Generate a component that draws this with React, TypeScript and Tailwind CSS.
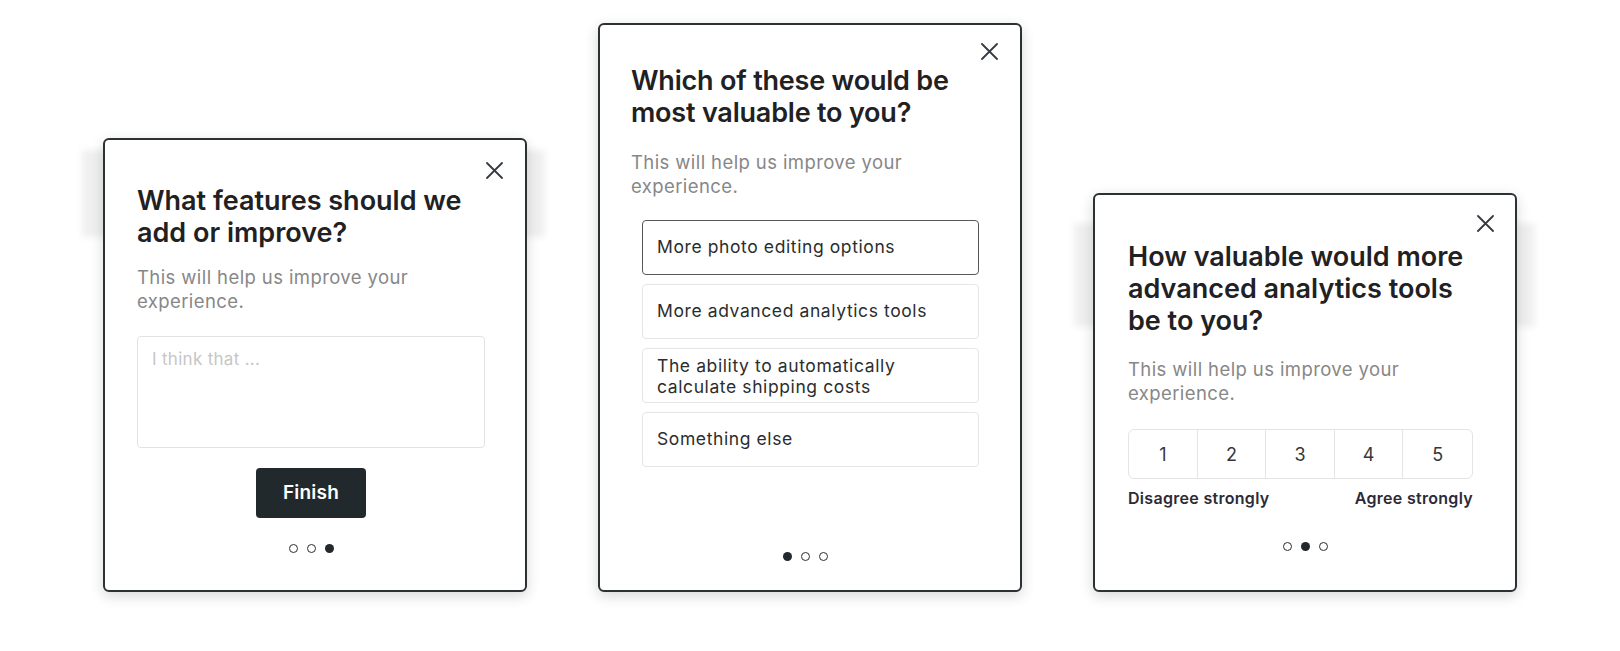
import React from "react";

function CloseIcon({ className }: { className: string }) {
  return (
    <svg className={className} width="17" height="17" viewBox="0 0 17 17" fill="none">
      <path d="M1 1L16 16M16 1L1 16" stroke="#353a42" strokeWidth="1.8" strokeLinecap="round" />
    </svg>
  );
}

function Dots({ active, className = "" }: { active: number; className?: string }) {
  return (
    <div className={`mt-auto flex justify-center gap-[9px] ${className}`}>
      {[0, 1, 2].map((i) =>
        i === active ? (
          <span key={i} className="block h-[9px] w-[9px] rounded-full bg-[#22282b]" />
        ) : (
          <span key={i} className="block h-[9px] w-[9px] rounded-full border-[1.5px] border-[#2a2e31] bg-white" />
        )
      )}
    </div>
  );
}

const cardBase =
  "relative z-10 flex w-[424px] flex-col rounded-[6px] border-2 border-[#2c3134] bg-white shadow-[0_4px_14px_rgba(0,0,0,0.16)]";
const titleCls = "text-[27px] leading-[32px] font-semibold text-[#1f2123] whitespace-nowrap";
const subCls = "text-[18.5px] leading-[24px] text-[#878787] whitespace-nowrap tracking-[0.4px]";
const optCls =
  "flex h-[55px] items-center rounded-[4px] border-[1.5px] px-[14px] text-[17.5px] leading-[21px] tracking-[0.6px] text-[#2b2d2f]";

export default function App() {
  return (
    <div className="flex h-[651px] w-[1620px] items-end justify-center gap-[71px] bg-white pb-[59px] font-['Inter',sans-serif]">
      {/* Card 1 */}
      <div className="relative">
        <div className="absolute left-[-21px] right-[-18px] top-[12px] h-[87px] bg-[#f0f0f0] blur-[3px]" />
        <div className={`${cardBase} h-[454px] pl-[32px] pr-[40px] pt-[45px] pb-[37px]`}>
          <CloseIcon className="absolute right-[22px] top-[22px]" />
          <h2 className={titleCls}>
            What features should we
            <br />
            add or improve?
          </h2>
          <p className={`${subCls} mt-[16px]`}>
            This will help us improve your
            <br />
            experience.
          </p>
          <textarea
            placeholder="I think that ..."
            className="mt-[23px] h-[112px] w-[348px] resize-none rounded-[4px] border-[1.5px] border-[#e2e2e2] px-[14px] pt-[10px] text-[17px] leading-[24px] tracking-[0.3px] text-[#333] outline-none placeholder:text-[#c6c6c6]"
          />
          <div className="mt-[20px] flex justify-center">
            <button className="h-[50px] w-[110px] rounded-[4px] bg-[#22292c] text-[19px] font-semibold tracking-[0.2px] text-white">
              Finish
            </button>
          </div>
          <Dots active={2} />
        </div>
      </div>

      {/* Card 2 */}
      <div className="relative">
        <div className={`${cardBase} h-[569px] pl-[31px] pr-[41px] pt-[40px] pb-[29px]`}>
          <CloseIcon className="absolute right-[22px] top-[18px]" />
          <h2 className={`${titleCls} tracking-[-0.2px]`}>
            Which of these would be
            <br />
            most valuable to you?
          </h2>
          <p className={`${subCls} mt-[21px]`}>
            This will help us improve your
            <br />
            experience.
          </p>
          <div className="ml-[11px] mt-[22px] flex flex-col gap-[9px]">
            <div className={`${optCls} border-[#55595c] pb-[3px]`}>More photo editing options</div>
            <div className={`${optCls} border-[#e6e6e6] pb-[3px]`}>More advanced analytics tools</div>
            <div className={`${optCls} border-[#e6e6e6]`}>
              <span>
                The ability to automatically
                <br />
                calculate shipping costs
              </span>
            </div>
            <div className={`${optCls} border-[#e6e6e6] pb-[3px]`}>Something else</div>
          </div>
          <Dots active={0} />
        </div>
      </div>

      {/* Card 3 */}
      <div className="relative">
        <div className="absolute left-[-19px] right-[-18px] top-[30px] h-[104px] bg-[#f0f0f0] blur-[3px]" />
        <div className={`${cardBase} h-[399px] pl-[33px] pr-[39px] pt-[46px] pb-[39px]`}>
          <CloseIcon className="absolute right-[21px] top-[20px]" />
          <h2 className={titleCls}>
            How valuable would more
            <br />
            advanced analytics tools
            <br />
            be to you?
          </h2>
          <p className={`${subCls} mt-[20px]`}>
            This will help us improve your
            <br />
            experience.
          </p>
          <div className="mt-[24px] grid h-[50px] w-[345px] grid-cols-5 divide-x-[1.5px] divide-[#e4e4e4] rounded-[6px] border-[1.5px] border-[#e4e4e4]">
            {[1, 2, 3, 4, 5].map((n) => (
              <div key={n} className="flex items-center justify-center text-[18px] text-[#353739]">
                {n}
              </div>
            ))}
          </div>
          <div className="mt-[9px] flex w-[345px] justify-between text-[16px] leading-[20px] font-semibold tracking-[0.3px] text-[#2b2b38]">
            <span>Disagree strongly</span>
            <span>Agree strongly</span>
          </div>
          <Dots active={1} className="pl-[7px]" />
        </div>
      </div>
    </div>
  );
}
